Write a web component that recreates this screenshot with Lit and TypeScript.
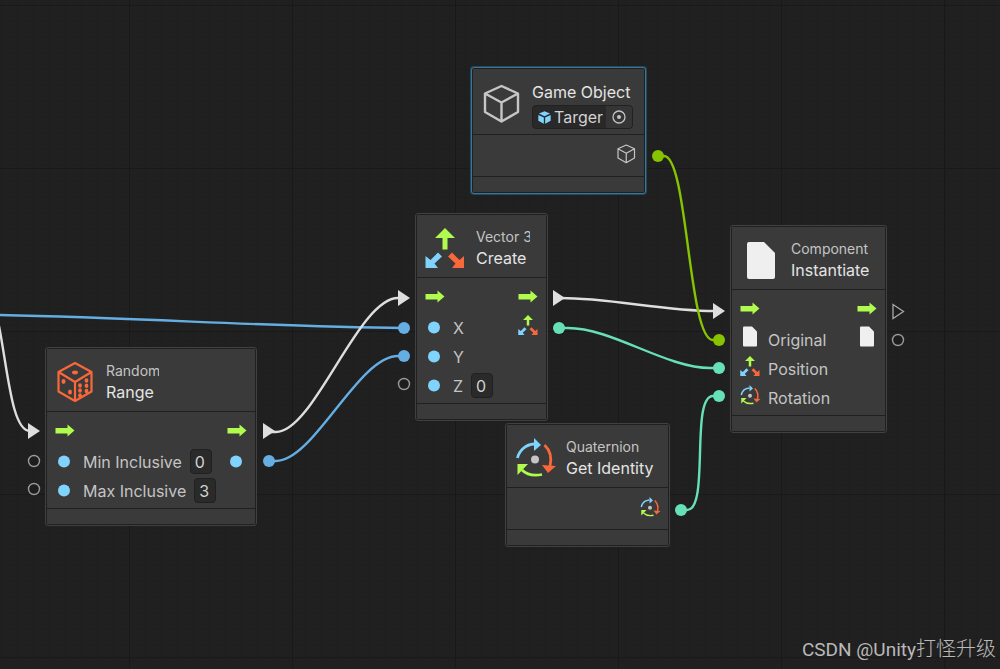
import { LitElement, html, css, svg, nothing } from 'lit';
import { customElement, property } from 'lit/decorators.js';

const GREEN = '#b0fb4e';
const SKY = '#7fd3fc';
const ORANGE = '#f9683a';

/* Icon artwork, drawn on a 40 x 40 board. */
const icons: Record<string, unknown> = {
  dice: svg`<g fill="none" stroke=${ORANGE} stroke-width="2.2" stroke-linejoin="round">
      <path d="M20 1 L36.500 10 V29.500 L20 39 L3.500 29.500 V10 Z M3.500 10 L20 20 L36.500 10 M20 20 V39"/></g>
    <g fill=${ORANGE}><ellipse cx="20" cy="10.500" rx="3" ry="1.900"/>
      <ellipse cx="8.500" cy="19.500" rx="2" ry="2.400"/><ellipse cx="15" cy="30" rx="2" ry="2.500"/>
      <ellipse cx="25" cy="23.500" rx="1.900" ry="2.300"/><ellipse cx="25" cy="28.500" rx="1.900" ry="2.300"/><ellipse cx="25" cy="33.500" rx="1.900" ry="2.200"/>
      <ellipse cx="31.500" cy="18.500" rx="1.900" ry="2.300"/><ellipse cx="31.500" cy="23.800" rx="1.900" ry="2.300"/><ellipse cx="31.500" cy="29" rx="1.900" ry="2.200"/></g>`,
  cube: svg`<path fill="none" stroke="#c6c6c6" stroke-width="2.4" stroke-linejoin="round"
      d="M20.500 2 L37 9.500 V28 L20.500 37.500 L4 28 V9.500 Z M4 9.500 L20.500 18.500 L37 9.500 M20.500 18.500 V37.500"/>`,
  prefab: svg`<path fill=${SKY} d="M20 1 L37 8 L20 16 L3 8 Z M1 12 L18 20 V39 L1 30 Z M39 12 L22 20 V39 L39 30 Z"/>`,
  axes: svg`<path fill=${GREEN} d="M20 0 L30 10 H22.500 V21.500 H17.500 V10 H10 Z"/>
    <path fill=${SKY} d="M13 24.500 L17 28.500 L9.500 35.500 L13 40 H0.500 V28 L5.500 32 Z"/>
    <path fill=${ORANGE} d="M27 24.500 L23 28.500 L30.500 35.500 L27 40 H39 V28 L34.500 32 Z"/>`,
  orbit: svg`<g fill="none" stroke-width="2.800">
      <path stroke=${SKY} d="M2.500 20 A18 18 0 0 1 19 6"/>
      <path stroke=${ORANGE} d="M29.500 7 Q38 15 35 28"/>
      <path stroke=${GREEN} d="M7 32 Q14 39 27 36.500"/></g>
    <path fill=${SKY} d="M19 0 L26 7 L19 13 Z"/>
    <path fill=${ORANGE} d="M27 27 L41 28 L33 35 Z"/>
    <path fill=${GREEN} d="M2.500 26 H13 L2.500 37 Z"/>
    <circle cx="20" cy="21.500" r="4" fill="#c4c4c4"/>`,
  page: svg`<path fill="#efefef" d="M9 2 H24 L35 13 V37 Q35 39 33 39 H9 Q7 39 7 37 V4 Q7 2 9 2 Z"/>`,
  pageSmall: svg`<path fill="#efefef" d="M8 -7 H24 L34 3 V31 Q34 33 32 33 H8 Q6 33 6 31 V-5 Q6 -7 8 -7 Z"/>`,
  axesSmall: svg`<g transform="translate(0 -6)">
    <path fill=${GREEN} d="M20 0 L30 10 H22.500 V21 H17.500 V10 H10 Z"/>
    <path fill=${SKY} d="M13 24.500 L17 28.500 L9.500 35.500 L13 40 H0.500 V28 L5.500 32 Z"/>
    <path fill=${ORANGE} d="M27 24.500 L23 28.500 L30.500 35.500 L27 40 H39 V28 L34.500 32 Z"/></g>`,
  orbitSmall: svg`<g transform="translate(0 -6)"><g fill="none" stroke-width="3">
      <path stroke=${SKY} d="M2.500 20 A18 18 0 0 1 19 6"/>
      <path stroke=${ORANGE} d="M29.500 7 Q38 15 35 28"/>
      <path stroke=${GREEN} d="M7 32 Q14 39 27 36.500"/></g>
    <path fill=${SKY} d="M19 0 L26 7 L19 13 Z"/>
    <path fill=${ORANGE} d="M27 27 L41 28 L33 35 Z"/>
    <path fill=${GREEN} d="M2.500 26 H13 L2.500 37 Z"/>
    <circle cx="20" cy="21.500" r="4" fill="#c4c4c4"/></g>`,
  flow: svg`<path fill=${GREEN} d="M1 14 H25 V7 L39 19 L25 31 V25 H1 Z"/>`,
  value: svg`<circle cx="18" cy="19" r="12" fill=${SKY}/>`,
};

@customElement('graph-icon')
class GraphIcon extends LitElement {
  @property() name = '';
  @property({ type: Number }) size = 20;
  static styles = css`
    :host { display: block; flex: none; }
    svg { display: block; overflow: visible; }
  `;
  render() {
    return html`<svg width=${this.size} height=${this.size} viewBox="0 0 40 40" aria-hidden="true">${icons[this.name]}</svg>`;
  }
}

interface Row { icon?: string; label?: string; value?: string; out?: string; }
interface NodeData {
  x: number; y: number; width: number;
  icon: string; category?: string; clip?: number; title: string; object?: string;
  selected?: boolean; rows: Row[];
}

@customElement('graph-node')
class GraphNode extends LitElement {
  @property({ attribute: false }) node!: NodeData;

  static styles = css`
    :host { display: block; }
    * { box-sizing: border-box; }
    .frame {
      display: flex; flex-direction: column; gap: 1px; padding: 1px;
      border: 1px solid #404040; border-radius: 3px; background: #202020;
      color: #c4c4c4; font: 16px/20px Inter, sans-serif;
    }
    .selected { border-color: #35779a; box-shadow: 0 0 0 1px #27485a; }
    header, .body, .foot { background: #3a3a3a; }
    header { display: flex; align-items: center; gap: 11px; min-height: 62px; padding: 4px 8px 0; }
    .text { display: flex; flex-direction: column; min-width: 0; }
    .tall { padding: 8px 0 5px; gap: 2px; }
    .category { font-size: 14px; line-height: 20px; white-space: nowrap; overflow: hidden; }
    h2 { margin: 0; font-size: 16px; line-height: 22px; font-weight: 400; color: #e4e4e4; white-space: nowrap; }
    .body { padding: 5px 8px 3px; }
    .compact { padding-bottom: 8px; }
    .row { display: flex; align-items: center; gap: 8px; height: 29px; }
    .row:first-child { height: 28px; margin-bottom: 2px; }
    .compact .row:first-child { margin-bottom: 0; }
    .out { margin-left: auto; }
    .foot { height: 15px; }
    input { font: inherit; color: #d2d2d2; min-width: 0; outline: none; }
    .number {
      width: 22px; height: 25px; padding: 0 4px;
      border: 1px solid #202020; border-radius: 4px; background: #2a2a2a;
    }
    .object {
      display: flex; align-items: center; gap: 3px; width: 101px; height: 24px; padding-left: 5px;
      border: 1px solid #212121; border-radius: 4px; background: #292929; overflow: hidden;
    }
    .object input { flex: 1; padding: 0; border: 0; background: none; }
    .object button {
      display: grid; place-items: center; width: 26px; height: 22px; padding: 0;
      border: 0; background: #353535; color: #c4c4c4;
    }
  `;

  row(r: Row, i: number) {
    const label = r.value === undefined
      ? html`<span>${r.label}</span>`
      : html`<label for="f${i}">${r.label}</label><input class="number" id="f${i}" .value=${r.value}>`;
    return html`<div class="row">
      ${r.icon ? html`<graph-icon name=${r.icon}></graph-icon>` : nothing}
      ${r.label ? label : nothing}
      ${r.out ? html`<graph-icon class="out" name=${r.out}></graph-icon>` : nothing}
    </div>`;
  }

  render() {
    const n = this.node;
    return html`<article class="frame ${n.selected ? 'selected' : ''}">
      <header>
        <graph-icon name=${n.icon} .size=${40}></graph-icon>
        <div class="text ${n.object ? 'tall' : ''}">
          ${n.category ? html`<div class="category" style=${n.clip ? `width:${n.clip}px` : ''}>${n.category}</div>` : nothing}
          <h2>${n.title}</h2>
          ${n.object ? html`<div class="object">
            <graph-icon name="prefab" .size=${13}></graph-icon>
            <input aria-label=${n.title} .value=${n.object}>
            <button type="button" aria-label="Select object">
              <svg width="14" height="14" viewBox="0 0 14 14"><circle cx="7" cy="7" r="6" fill="none" stroke="currentColor" stroke-width="1.300"/><circle cx="7" cy="7" r="2" fill="currentColor"/></svg>
            </button>
          </div>` : nothing}
        </div>
      </header>
      <div class="body ${n.rows.length === 1 ? 'compact' : ''}">${n.rows.map((r, i) => this.row(r, i))}</div>
      <div class="foot"></div>
    </article>`;
  }
}

const nodes: NodeData[] = [
  { x: 45, y: 347, width: 212, icon: 'dice', category: 'Random', clip: 53, title: 'Range', rows: [
    { icon: 'flow', out: 'flow' },
    { icon: 'value', label: 'Min Inclusive', value: '0', out: 'value' },
    { icon: 'value', label: 'Max Inclusive', value: '3' } ] },
  { x: 415, y: 213, width: 133, icon: 'axes', category: 'Vector 3', clip: 54, title: 'Create', rows: [
    { icon: 'flow', out: 'flow' },
    { icon: 'value', label: 'X', out: 'axesSmall' },
    { icon: 'value', label: 'Y' },
    { icon: 'value', label: 'Z', value: '0' } ] },
  { x: 471, y: 67, width: 175, icon: 'cube', title: 'Game Object', object: 'Targer', selected: true, rows: [{ out: 'cube' }] },
  { x: 505, y: 423, width: 165, icon: 'orbit', category: 'Quaternion', title: 'Get Identity', rows: [{ out: 'orbit' }] },
  { x: 730, y: 225, width: 157, icon: 'page', category: 'Component', title: 'Instantiate', rows: [
    { icon: 'flow', out: 'flow' },
    { icon: 'pageSmall', label: 'Original', out: 'pageSmall' },
    { icon: 'axesSmall', label: 'Position' },
    { icon: 'orbitSmall', label: 'Rotation' } ] },
];

const WHITE = '#dedede', BLUE = '#65aee3', TEAL = '#66e0b5', LIME = '#86c300';

const wires: [string, string][] = [
  [WHITE, 'M-1 326 C8 372 12 431 30 431'],
  [BLUE, 'M-1 315 C150 318 270 327 404 328'],
  [WHITE, 'M270 432 H276 C314 432 358 298 398 298'],
  [BLUE, 'M269 461 H276 C314 461 358 356 398 356 H404'],
  [WHITE, 'M560 298 C612 298 662 311 715 311'],
  [TEAL, 'M559 328 H568 C612 328 666 368 710 368 H719'],
  [LIME, 'M658 156 H664 C688 156 688 340 713 340 H719'],
  [TEAL, 'M681 510 H687 C710 510 690 396 713 396 H719'],
];
const dots: [string, number, number][] = [
  [BLUE, 404, 328], [BLUE, 404, 356], [BLUE, 269, 461], [TEAL, 559, 328],
  [LIME, 658, 156], [LIME, 719, 340], [TEAL, 719, 368], [TEAL, 719, 396], [TEAL, 681, 510],
];
const rings = [[34, 461], [34, 489], [404, 384], [898, 340]];
const arrows = [[28, 431], [263, 431], [398, 298], [553, 298], [713, 311]];

@customElement('app-root')
class AppRoot extends LitElement {
  static styles = css`
    :host { display: block; }
    .canvas {
      position: relative; min-height: 100vh; overflow: hidden; background-color: #202020;
      background-image:
        linear-gradient(to right, #191919 1px, transparent 1px),
        linear-gradient(to bottom, #191919 1px, transparent 1px),
        linear-gradient(to right, #1e1e1e 1px, transparent 1px),
        linear-gradient(to bottom, #1e1e1e 1px, transparent 1px);
      background-size: 163px 163px, 163px 163px, 16px 16px, 16px 16px;
      background-position: 129px 0, 0 5px, 1px 0, 0 5px;
    }
    .wires { position: absolute; inset: 0; width: 100%; height: 100%; }
    graph-node { position: absolute; }
    .credit {
      position: absolute; right: 4px; bottom: 5px; margin: 0; color: #b9b9b9;
      font: 20px/28px "Noto Sans CJK SC", sans-serif; font-weight: 300;
    }
    .latin { font-family: Roboto, sans-serif; font-size: 19px; font-weight: 400; }
  `;
  render() {
    return html`<main class="canvas">
      ${nodes.map(n => html`<graph-node .node=${n} style="left:${n.x}px;top:${n.y}px;width:${n.width}px"></graph-node>`)}
      <svg class="wires" aria-hidden="true">
        ${wires.map(([c, d]) => svg`<path d=${d} fill="none" stroke=${c} stroke-width="2.400"/>`)}
        ${dots.map(([c, x, y]) => svg`<circle cx=${x} cy=${y} r="6" fill=${c}/>`)}
        ${rings.map(([x, y]) => svg`<circle cx=${x} cy=${y} r="5.500" fill="#1d1d1d" stroke="#9a9a9a" stroke-width="1.400"/>`)}
        ${arrows.map(([x, y]) => svg`<path d="M${x} ${y - 8} L${x + 12} ${y} L${x} ${y + 8} Z" fill=${WHITE}/>`)}
        <path d="M893 304.500 L903.500 311.500 L893 318.500 Z" fill="#1d1d1d" stroke="#a8a8a8" stroke-width="1.300"/>
      </svg>
      <p class="credit"><span class="latin">CSDN @Unity</span>打怪升级</p>
    </main>`;
  }
}
